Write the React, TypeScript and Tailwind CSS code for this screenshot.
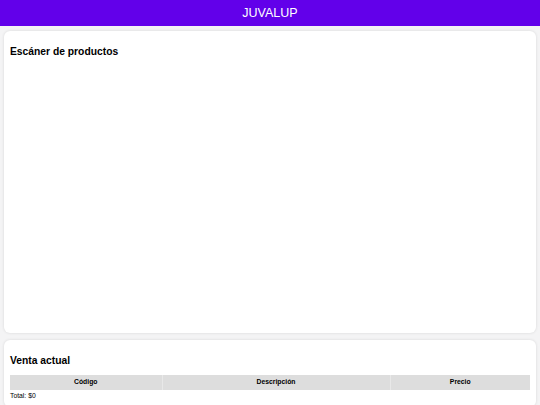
import React from 'react';

const columnas = [
  { label: 'Código', width: 'w-[152px]' },
  { label: 'Descripción', width: 'w-[228px]' },
  { label: 'Precio', width: '' },
];

export default function App() {
  return (
    <div className="min-h-[405px] bg-[#f4f4f5] font-['Liberation_Sans',Arial,sans-serif] text-black">
      {/* Header */}
      <header className="h-[26px] bg-[#6200ea] flex items-center justify-center text-white text-[12.5px]">
        JUVALUP
      </header>

      <main className="flex flex-col gap-[7px] px-[4px] pt-[5px]">
        {/* Escáner */}
        <section className="h-[302px] bg-white rounded-[6px] shadow-[0_0_3px_rgba(0,0,0,0.12)] px-[6px] pt-[14px]">
          <h2 className="text-[10.3px] leading-[13px] font-bold">Escáner de productos</h2>
        </section>

        {/* Venta actual */}
        <section className="bg-white rounded-[6px] shadow-[0_0_3px_rgba(0,0,0,0.12)] px-[6px] pt-[14px] pb-[7px]">
          <h2 className="text-[10.3px] leading-[13px] font-bold mb-[8px]">Venta actual</h2>
          <table className="w-full border-collapse">
            <thead>
              <tr className="bg-[#dddddd]">
                {columnas.map((c) => (
                  <th
                    key={c.label}
                    className={`${c.width} h-[15px] p-0 text-[6.8px] font-bold text-center border-l border-[#e8e8e8] first:border-l-0`}
                  >
                    {c.label}
                  </th>
                ))}
              </tr>
            </thead>
          </table>
          <p className="text-[6.8px] leading-[9px] mt-[1px]">Total: $0</p>
        </section>
      </main>
    </div>
  );
}
